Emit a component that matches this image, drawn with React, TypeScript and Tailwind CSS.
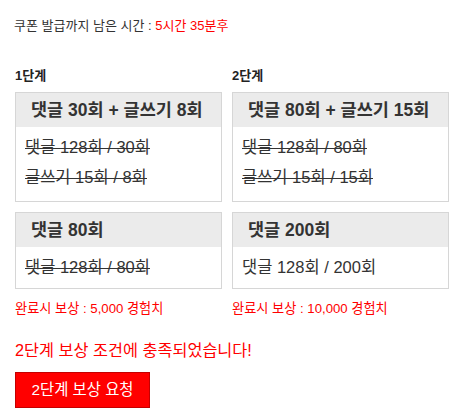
import React from 'react';

interface Mission {
  title: string;
  lines: { text: string; done: boolean }[];
}

interface Stage {
  label: string;
  reward: string;
  boxWidth: string;
  missions: Mission[];
}

const stages: Stage[] = [
  {
    label: '1단계',
    reward: '완료시 보상 : 5,000 경험치',
    boxWidth: 'w-[207px]',
    missions: [
      {
        title: '댓글 30회 + 글쓰기 8회',
        lines: [
          { text: '댓글 128회 / 30회', done: true },
          { text: '글쓰기 15회 / 8회', done: true },
        ],
      },
      {
        title: '댓글 80회',
        lines: [{ text: '댓글 128회 / 80회', done: true }],
      },
    ],
  },
  {
    label: '2단계',
    reward: '완료시 보상 : 10,000 경험치',
    boxWidth: 'w-[217px]',
    missions: [
      {
        title: '댓글 80회 + 글쓰기 15회',
        lines: [
          { text: '댓글 128회 / 80회', done: true },
          { text: '글쓰기 15회 / 15회', done: true },
        ],
      },
      {
        title: '댓글 200회',
        lines: [{ text: '댓글 128회 / 200회', done: false }],
      },
    ],
  },
];

const MissionBox: React.FC<{ mission: Mission; width: string }> = ({ mission, width }) => (
  <div className={`${width} border border-[#d6d6d6] bg-white`}>
    <div className="h-[34px] bg-[#ebebeb] pl-[15px] flex items-center text-[17.5px] font-semibold text-[#333]">
      {mission.title}
    </div>
    <div className={`pl-[9px] pt-[5px] ${mission.lines.length > 1 ? 'pb-[9px]' : 'pb-[6px]'}`}>
      {mission.lines.map((line) => (
        <div key={line.text} className="h-[30px] leading-[30px] text-[16.5px] text-[#333]">
          {line.done ? (
            <span className="relative inline-block after:content-[''] after:absolute after:left-0 after:right-0 after:top-[16px] after:h-px after:bg-[#333]">
              {line.text}
            </span>
          ) : (
            line.text
          )}
        </div>
      ))}
    </div>
  </div>
);

export default function App() {
  return (
    <div
      className="w-[474px] h-[410px] bg-white px-[15px] pt-[17px] text-[#333] overflow-hidden"
      style={{ fontFamily: '"Liberation Sans", "Noto Sans CJK KR", sans-serif' }}
    >
      <div className="text-[13px] leading-[18px] -ml-px">
        쿠폰 발급까지 남은 시간 : <span className="text-[#ff0000]">5시간 35분후</span>
      </div>

      <div className="flex mt-[34px]">
        {stages.map((stage) => (
          <div key={stage.label} className="w-[217px]">
            <div className="text-[13px] font-bold leading-[14px] text-[#222]">{stage.label}</div>
            <div className="mt-[9px] flex flex-col gap-[10px]">
              {stage.missions.map((m) => (
                <MissionBox key={m.title} mission={m} width={stage.boxWidth} />
              ))}
            </div>
            <div className="mt-[11px] text-[13.2px] leading-[18px] text-[#ff0000]">{stage.reward}</div>
          </div>
        ))}
      </div>

      <div className="mt-[22px] text-[16.3px] leading-[20px] text-[#ff0000]">2단계 보상 조건에 충족되었습니다!</div>

      <button className="mt-[12px] w-[135px] h-[36px] bg-[#ff0000] border border-[#c40000] text-white text-[15.4px] flex items-center justify-center">
        2단계 보상 요청
      </button>
    </div>
  );
}
